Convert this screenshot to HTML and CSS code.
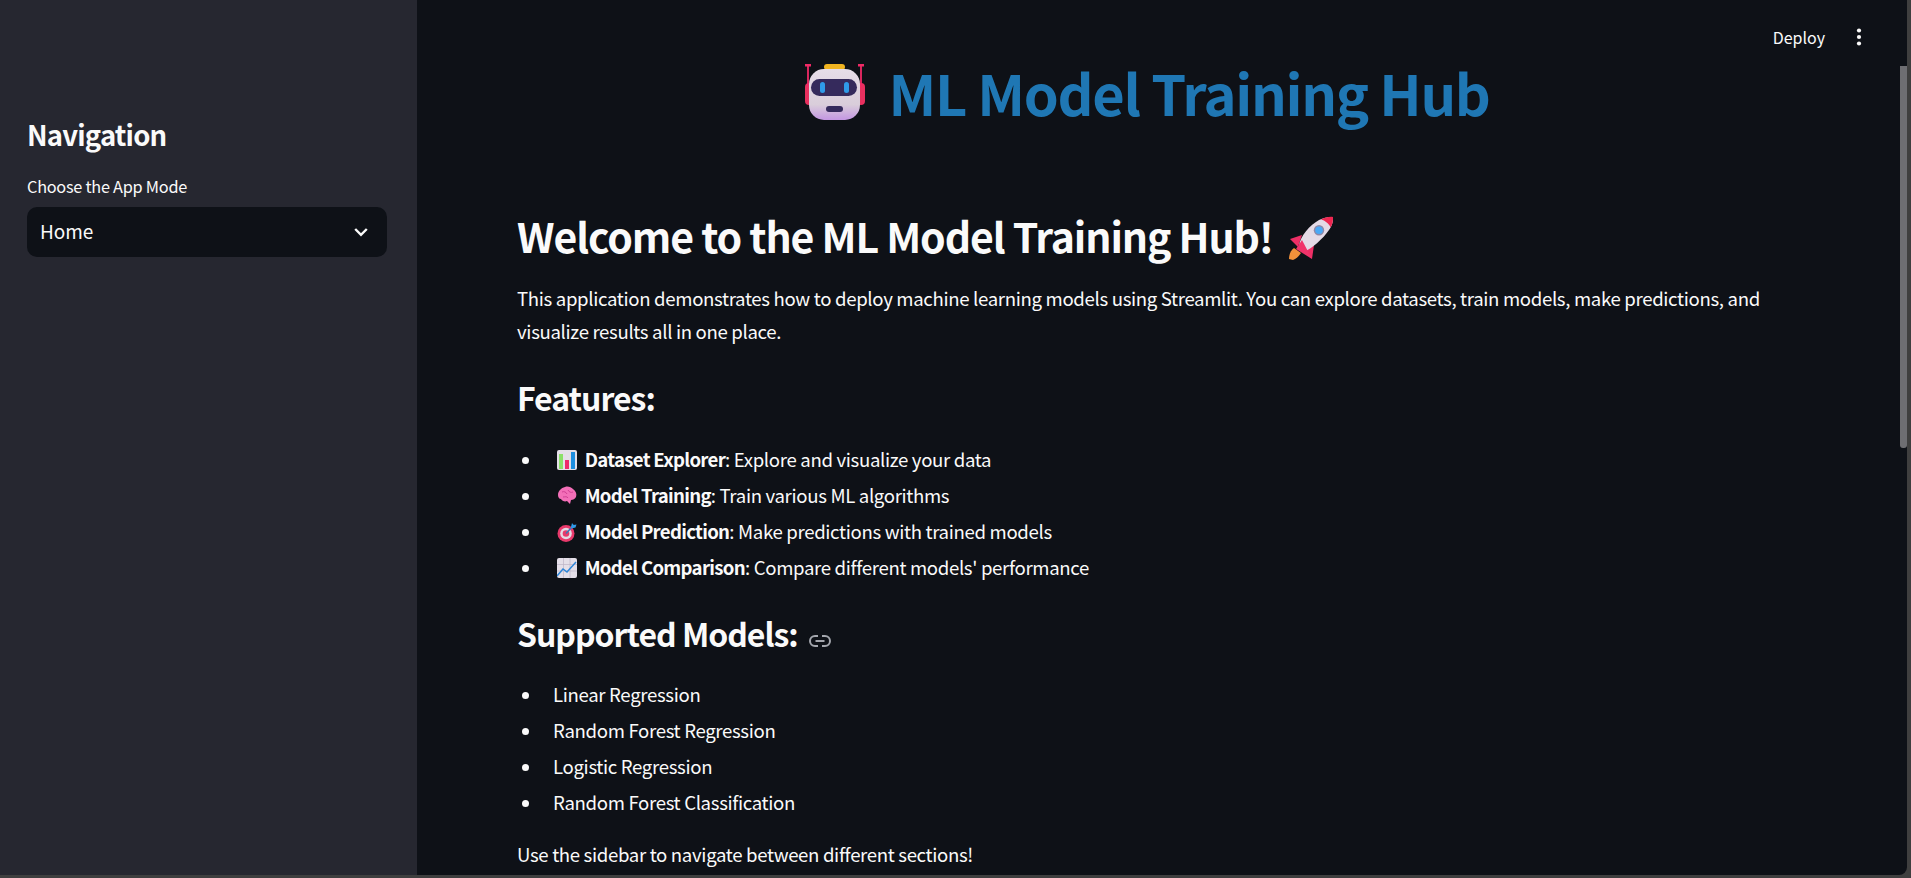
FILE: index.html
```html
<!DOCTYPE html>
<html lang="en">

<head>
  <meta charset="UTF-8">
  <meta name="viewport" content="width=device-width, initial-scale=1.0">
  <title>ML Model Training Hub</title>
  <link rel="stylesheet" href="styles.css">
</head>

<body>
  <div class="window">
    <aside class="sidebar">
      <h2 class="side-title">Navigation</h2>
      <label class="side-label">Choose the App Mode</label>
      <div class="select">
        <span>Home</span>
        <svg class="chevron" width="20" height="20" viewBox="0 0 20 20"><path d="M4.200 7 10 12.800 15.800 7" fill="none" stroke="#fafafa" stroke-width="2.400" /></svg>
      </div>
    </aside>

    <main class="main">
      <header class="toolbar">
        <span class="deploy">Deploy</span>
        <svg class="dots" width="6" height="18" viewBox="0 0 6 18"><circle cx="3" cy="2.500" r="2.100" /><circle cx="3" cy="9" r="2.100" /><circle cx="3" cy="15.500" r="2.100" /></svg>
      </header>

      <h1 class="hub-title">
        <svg class="robot" width="60" height="56" viewBox="0 0 60 56">
          <defs>
            <linearGradient id="face" x1="0" y1="0" x2="0" y2="1">
              <stop offset="0" stop-color="#e6dde8" />
              <stop offset="0.7" stop-color="#d9cdda" />
              <stop offset="1" stop-color="#c496e2" />
            </linearGradient>
          </defs>
          <rect x="0" y="19" width="8" height="22" rx="4" fill="#e8305f" />
          <rect x="52" y="19" width="8" height="22" rx="4" fill="#e8305f" />
          <path d="M3 1v22M56 1v22" stroke="#f02a66" stroke-width="1.800" />
          <rect x="0" y="0" width="6" height="2.500" fill="#f02a66" />
          <rect x="53" y="0" width="6" height="2.500" fill="#f02a66" />
          <rect x="19" y="0" width="21" height="6" rx="3" fill="#f0b420" />
          <rect x="4" y="5" width="51" height="51" rx="15" fill="url(#face)" />
          <rect x="6" y="15" width="46" height="17" rx="8.500" fill="#352a5c" />
          <rect x="15" y="18" width="5" height="11" rx="2.500" fill="#2f9be8" />
          <rect x="39" y="18" width="5" height="11" rx="2.500" fill="#2f9be8" />
          <rect x="21" y="42" width="17" height="6" rx="3" fill="#352a5c" />
        </svg>
        <span>ML Model Training Hub</span>
      </h1>

      <section class="block">
        <h1 class="welcome">Welcome to the ML Model Training Hub!
          <svg class="rocket" width="45" height="45" viewBox="0 0 45 45">
            <path d="M1 44C1 39 3 35 6 33l7 5c-2 3-5 6-8 7z" fill="#f2913a" />
            <path d="M2 24l12-4-4 12z" fill="#ee2f66" />
            <path d="M24 44l2-14-11 6z" fill="#ee2f66" />
            <path d="M11 31C12 21 22 10 31 5c5-2.500 10-3.500 14-3 .500 4-1 9-4 13-6 9-17 18-25 22z" fill="#e4dae6" />
            <path d="M33 4.500C37 2.500 41 1.500 45 2c.3 3.500-.7 7.500-2.300 10.500C41 8.500 37 5.500 33 4.500z" fill="#ee2650" />
            <path d="M14 25 24 44 8 34z" fill="#f0336a" />
            <circle cx="31" cy="15.300" r="5.200" fill="#8f88a8" />
            <circle cx="31" cy="15.300" r="3.800" fill="#4aa8f5" />
          </svg>
        </h1>
        <p class="para">This application demonstrates how to deploy machine learning models using Streamlit. You can explore datasets, train models, make predictions, and visualize results all in one place.</p>

        <h2 class="sub">Features:</h2>
        <ul class="list">
          <li>
            <svg class="emo" width="20" height="20" viewBox="0 0 20 20">
              <rect width="20" height="20" rx="2" fill="#e4dfe8" />
              <rect x="2" y="4" width="4" height="15" fill="#8be06a" />
              <rect x="8" y="10" width="4" height="9" fill="#ee2a6b" />
              <rect x="14" y="2" width="4" height="17" fill="#1e8fe0" />
            </svg>
            <b>Dataset Explorer</b>: Explore and visualize your data
          </li>
          <li>
            <svg class="emo" width="20" height="20" viewBox="0 0 20 20">
              <path d="M1 9c0-4 3-7 7-8 3-1 6 0 8 2 3 2 4 5 3 8-1 2-3 3-5 3l-1 4-3-3c-2 1-5 0-6-2-2 0-3-2-3-4z" fill="#f36fb8" />
              <path d="M5 6c2-1 4 0 5 2M11 4c1 2 3 3 5 2M6 11c2 0 4-1 5 1" fill="none" stroke="#d13f94" stroke-width="1" />
            </svg>
            <b>Model Training</b>: Train various ML algorithms
          </li>
          <li>
            <svg class="emo" width="20" height="20" viewBox="0 0 20 20">
              <circle cx="9" cy="11.500" r="8.500" fill="#e8396b" />
              <circle cx="9" cy="11.500" r="5.800" fill="#e3d9e4" />
              <circle cx="9" cy="11.500" r="3.300" fill="#e8396b" />
              <path d="M9 11.500 17 3" stroke="#3a78b8" stroke-width="1.500" />
              <path d="M14 5l1-4 1.500 2 3-.500-1 3-4 1z" fill="#2f9be8" />
            </svg>
            <b>Model Prediction</b>: Make predictions with trained models
          </li>
          <li>
            <svg class="emo" width="20" height="20" viewBox="0 0 20 20">
              <rect width="20" height="20" rx="2" fill="#e4dfe8" />
              <path d="M0 6.500h20M0 13h20M6.500 0v20M13 0v20" stroke="#bdb5c6" stroke-width=".7" />
              <path d="M0 18 6 11l4 3 9-10" fill="none" stroke="#2f86d8" stroke-width="1.500" />
            </svg>
            <b>Model Comparison</b>: Compare different models' performance
          </li>
        </ul>

        <h2 class="sub sub-link">Supported Models:
          <svg class="link" width="22" height="12" viewBox="0 0 22 12"><path d="M9 1H6a5 5 0 0 0 0 10h3M13 1h3a5 5 0 0 1 0 10h-3M6.500 6h9" fill="none" stroke="#a3a6ad" stroke-width="2" /></svg>
        </h2>
        <ul class="list">
          <li>Linear Regression</li>
          <li>Random Forest Regression</li>
          <li>Logistic Regression</li>
          <li>Random Forest Classification</li>
        </ul>

        <p class="para last">Use the sidebar to navigate between different sections!</p>
      </section>
    </main>

    <div class="scrollbar">
      <div class="thumb"></div>
    </div>
  </div>
</body>

</html>
```

FILE: styles.css
```css
* {
  margin: 0;
  padding: 0;
  box-sizing: border-box;
}

html,
body {
  width: 100%;
  height: 100%;
  overflow: hidden;
}

body {
  background: #3f3f3f;
  padding: 0 4px 3px 0;
  font-family: "Noto Sans CJK SC", "Noto Sans", sans-serif;
  color: #fafafa;
}

.window {
  display: flex;
  height: 100%;
  background: #0e1117;
  border-bottom-right-radius: 8px;
  overflow: hidden;
}

.sidebar {
  flex: 0 0 417px;
  padding: 116px 30px 0 27px;
  background: #262730;
}

.side-title {
  font-size: 27.500px;
  letter-spacing: -0.8px;
  line-height: 36px;
  font-weight: 600;
  margin-bottom: 23px;
}

.side-label {
  display: block;
  font-size: 16.300px;
  letter-spacing: -0.26px;
  line-height: 22px;
  margin-bottom: 10px;
}

.select {
  display: flex;
  justify-content: space-between;
  align-items: center;
  height: 50px;
  padding: 0 16px 4px 13px;
  background: #0e1117;
  border-radius: 10px;
  font-size: 19px;
  letter-spacing: -0.1px;
}

.chevron {
  margin-top: 4px;
}

.main {
  position: relative;
  flex: 1;
  min-width: 0;
  padding: 57px 0 0 100px;
}

/* sits over the page like the fixed app header */
.toolbar {
  position: absolute;
  top: 0;
  right: 0;
  display: flex;
  align-items: center;
  gap: 31px;
  height: 73px;
  padding-right: 38px;
  font-size: 16px;
}

.dots {
  fill: #fafafa;
}

.hub-title {
  display: flex;
  justify-content: center;
  align-items: center;
  gap: 23px;
  height: 70px;
  margin-left: -100px;
  padding-right: 22px;
  color: #1f77b4;
  font-size: 56px;
  letter-spacing: -1.32px;
  line-height: 70px;
  font-weight: 700;
}

.block {
  padding-top: 83px;
  width: 1290px;
}

.welcome {
  font-size: 41px;
  letter-spacing: -1.1px;
  line-height: 50px;
  font-weight: 600;
  margin-bottom: 21px;
}

.rocket {
  vertical-align: -7px;
  margin-left: 7px;
}

.para {
  font-size: 18.600px;
  letter-spacing: -0.33px;
  line-height: 33px;
}

.sub {
  font-size: 32px;
  letter-spacing: -1px;
  line-height: 40px;
  font-weight: 600;
  margin-top: 30px;
  margin-bottom: 24px;
}

.sub-link {
  margin-top: 28px;
  margin-bottom: 23px;
}

.link {
  margin-left: 5px;
}

.list {
  list-style: none;
  padding-left: 5px;
  font-size: 18.600px;
  letter-spacing: -0.33px;
  line-height: 36px;
}

.list li::before {
  content: "";
  display: inline-block;
  width: 7px;
  height: 7px;
  margin-right: 24px;
  border-radius: 50%;
  background: #fafafa;
  vertical-align: 3px;
}

.emo {
  vertical-align: -3px;
  margin-right: 4px;
}

.list b {
  font-weight: 600;
  letter-spacing: -0.69px;
}

.last {
  margin-top: 17px;
}

.scrollbar {
  flex: 0 0 7px;
  padding-top: 66px;
}

.thumb {
  height: 382px;
  background: #6e6e72;
  border-radius: 0 0 3px 3px;
}
```
